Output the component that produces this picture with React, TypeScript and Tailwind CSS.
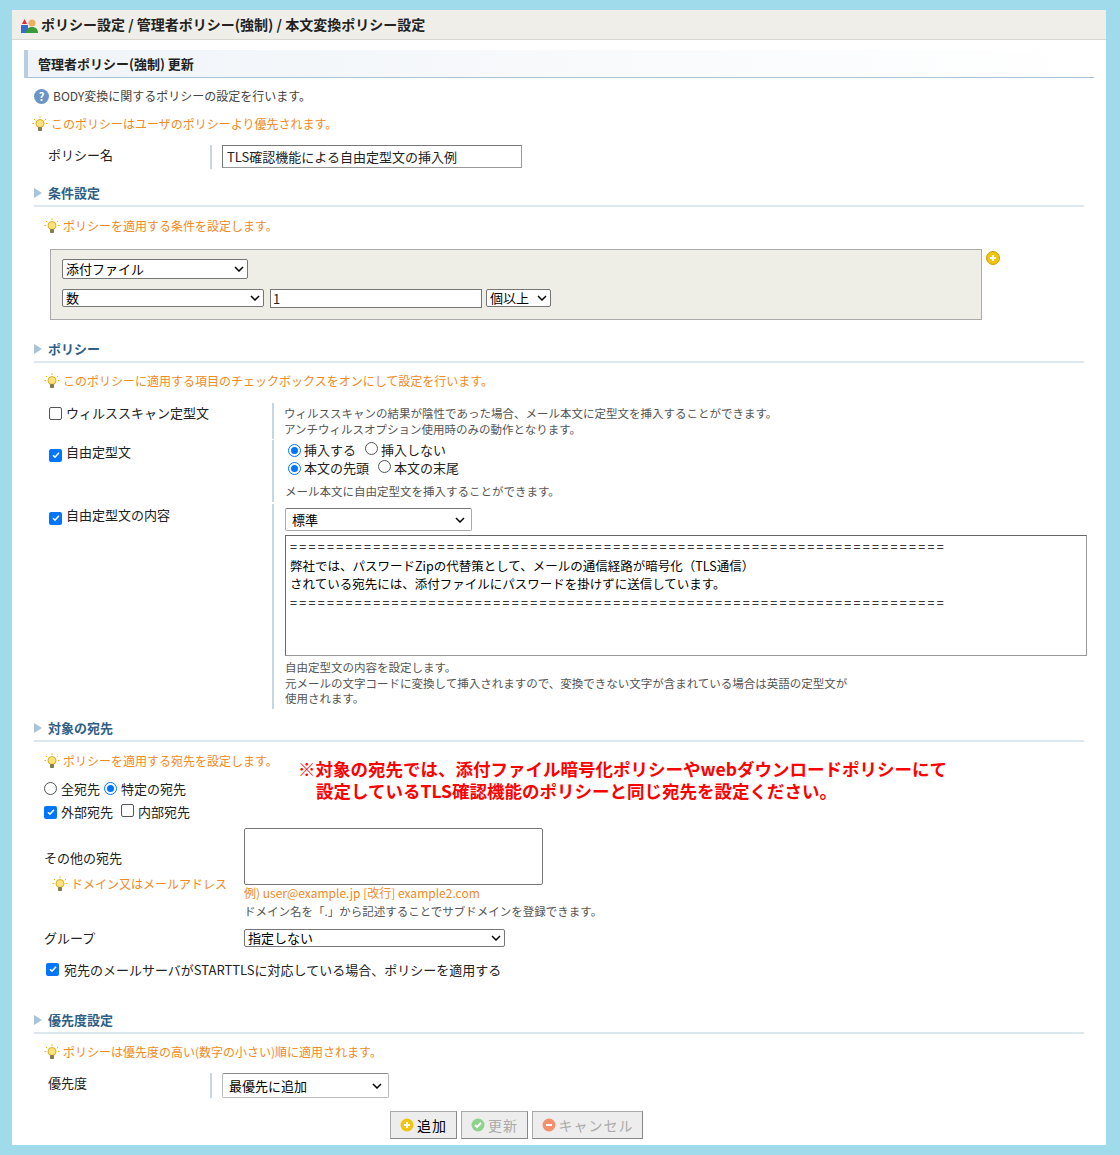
import React from "react";

const Bulb = () => (
  <svg width="16" height="16" viewBox="0 0 16 16" className="inline-block shrink-0">
    <g stroke="#f0b400" strokeWidth="1">
      <line x1="8" y1="0.5" x2="8" y2="2" /><line x1="2" y1="3" x2="3.2" y2="4.2" /><line x1="14" y1="3" x2="12.8" y2="4.2" />
      <line x1="0.5" y1="7.5" x2="2" y2="7.5" /><line x1="14" y1="7.5" x2="15.5" y2="7.5" />
    </g>
    <circle cx="8" cy="7.5" r="4" fill="#ffe37a" stroke="#c8a000" strokeWidth="0.8" />
    <rect x="6" y="11" width="4" height="4" rx="0.8" fill="#8a7a50" />
  </svg>
);

const Hint = ({ children, cls = "" }: { children: React.ReactNode; cls?: string }) => (
  <div className={`flex items-center gap-[3px] text-[12px] text-[#f08a24] ${cls}`}>
    <Bulb />
    <span>{children}</span>
  </div>
);

const Section = ({ title, cls = "" }: { title: string; cls?: string }) => (
  <div className={`mx-[22px] border-b-2 border-[#dce8f0] flex items-center h-[26px] ${cls}`}>
    <span className="w-0 h-0 border-y-[5px] border-y-transparent border-l-[8px] border-l-[#a9c4d8] ml-[0px] mr-[6px]" />
    <span className="text-[13px] font-bold text-[#2f5f86]">{title}</span>
  </div>
);

const Select = ({ text, cls }: { text: string; cls: string }) => (
  <div className={`flex items-center justify-between border border-[#767676] rounded-[2px] bg-white px-[3px] text-[13px] text-black ${cls}`}>
    <span>{text}</span>
    <svg width="10" height="6" viewBox="0 0 10 6"><path d="M1 1l4 4 4-4" fill="none" stroke="#000" strokeWidth="1.5" /></svg>
  </div>
);

const Check = ({ on }: { on: boolean }) =>
  on ? (
    <span className="inline-flex w-[13px] h-[13px] rounded-[2px] bg-[#0075ff] items-center justify-center shrink-0">
      <svg width="10" height="10" viewBox="0 0 10 10"><path d="M2 5.2l2 2 4-4.5" fill="none" stroke="#fff" strokeWidth="1.6" /></svg>
    </span>
  ) : (
    <span className="inline-block w-[13px] h-[13px] rounded-[2px] border border-[#555] bg-white shrink-0" />
  );

const Radio = ({ on }: { on: boolean }) =>
  on ? (
    <span className="inline-flex w-[13px] h-[13px] rounded-full border-[1.5px] border-[#0075ff] items-center justify-center shrink-0">
      <span className="w-[7px] h-[7px] rounded-full bg-[#0075ff]" />
    </span>
  ) : (
    <span className="inline-block w-[13px] h-[13px] rounded-full border border-[#555] bg-white shrink-0" />
  );

const Btn = ({ color, label, dis, w, icon }: { color: string; label: string; dis?: boolean; w: string; icon: React.ReactNode }) => (
  <div className={`flex items-center justify-center gap-[3px] h-[28px] border border-[#aaa] border-b-[#888] border-r-[#888] bg-[#ededed] text-[14px] tracking-[1px] ${dis ? "text-[#aaa]" : "text-black"} ${w}`}>
    <svg width="14" height="14" viewBox="0 0 14 14">
      <circle cx="7" cy="7" r="6.5" fill={color} />
      {icon}
    </svg>
    <span>{label}</span>
  </div>
);

const eq = "=".repeat(71);

export default function App() {
  return (
    <div className="w-[1120px] h-[1155px] bg-[#9fdbea] pt-[10px] pl-[12px] pr-[14px]" style={{ fontFamily: '"Noto Sans CJK JP", "Noto Sans", sans-serif' }}>
      <div className="bg-white h-[1135px] text-[#222]">
        <div className="h-[30px] bg-[#efeee9] border-b border-[#d8d8d0] flex items-center pl-[8px] gap-[3px]">
          <svg width="18" height="18" viewBox="0 0 18 18">
            <rect x="1" y="9" width="7" height="8" fill="#3a6bc8" />
            <path d="M2 8l2.5-5 2.5 5z" fill="#e23" />
            <circle cx="12" cy="7" r="3.5" fill="#e8b060" />
            <path d="M6 17c0-4 2.5-6 6-6s6 2 6 6z" fill="#3a9a3a" />
          </svg>
          <span className="text-[14px] font-bold">ポリシー設定 / 管理者ポリシー(強制) / 本文変換ポリシー設定</span>
        </div>
        <div className="ml-[12px] mr-[12px] mt-[10px] h-[28px] border-l-4 border-[#b8cde0] border-b border-b-[#a9c4d8] bg-gradient-to-r from-[#f0f4f8] to-white flex items-center pl-[10px] text-[13px] font-bold">
          管理者ポリシー(強制) 更新
        </div>
        <div className="ml-[22px] mt-[9px] flex items-center gap-[4px] text-[12px] text-[#444]">
          <span className="w-[15px] h-[15px] rounded-full bg-[#6b95c8] text-white text-[11px] font-bold flex items-center justify-center">?</span>
          BODY変換に関するポリシーの設定を行います。
        </div>
        <Hint cls="ml-[20px] mt-[10px]">このポリシーはユーザのポリシーより優先されます。</Hint>
        <div className="flex mt-[12px] h-[24px]">
          <div className="w-[198px] pl-[36px] text-[13px]">ポリシー名</div>
          <div className="border-l-2 border-[#c5d6e4] pl-[10px]">
            <div className="w-[300px] h-[23px] border border-[#999] border-t-[#777] border-l-[#777] bg-white text-[13px] px-[4px] flex items-center">TLS確認機能による自由定型文の挿入例</div>
          </div>
        </div>
        <Section title="条件設定" cls="mt-[12px]" />
        <Hint cls="ml-[32px] mt-[10px]">ポリシーを適用する条件を設定します。</Hint>
        <div className="flex mt-[14px] ml-[38px]">
          <div className="w-[932px] h-[71px] bg-[#eeede6] border border-[#aaa] pl-[11px] pt-[9px]">
            <Select text="添付ファイル" cls="w-[186px] h-[20px]" />
            <div className="flex gap-[6px] mt-[10px]">
              <Select text="数" cls="w-[202px] h-[18px]" />
              <div className="w-[212px] h-[19px] border border-[#777] bg-white text-[13px] px-[2px] flex items-center">1</div>
              <Select text="個以上" cls="w-[65px] h-[18px] ml-[-2px]" />
            </div>
          </div>
          <svg width="14" height="14" viewBox="0 0 14 14" className="ml-[4px] mt-[2px]">
            <circle cx="7" cy="7" r="6.5" fill="#f1c40f" stroke="#c9a200" />
            <path d="M7 4v6M4 7h6" stroke="#fff" strokeWidth="2" />
          </svg>
        </div>
        <Section title="ポリシー" cls="mt-[17px]" />
        <Hint cls="ml-[32px] mt-[9px]">このポリシーに適用する項目のチェックボックスをオンにして設定を行います。</Hint>
        <div className="mt-[13px] text-[13px]">
          <div className="flex">
            <div className="w-[260px] pl-[37px] flex items-center gap-[4px] h-[20px]"><Check on={false} />ウィルススキャン定型文</div>
            <div className="border-l-2 border-[#c5d6e4] pl-[10px] text-[11.5px] text-[#555] leading-[16px] pt-[2px] pb-[2px]">
              <div>ウィルススキャンの結果が陰性であった場合、メール本文に定型文を挿入することができます。</div>
              <div>アンチウィルスオプション使用時のみの動作となります。</div>
            </div>
          </div>
          <div className="flex mt-[1px]">
            <div className="w-[260px] pl-[37px] flex items-start gap-[4px] pt-[2px]"><span className="mt-[3px]"><Check on /></span>自由定型文</div>
            <div className="border-l-2 border-[#c5d6e4] pl-[14px] pb-[2px]">
              <div className="flex items-center gap-[3px] h-[18px] mt-[1px]"><Radio on />挿入する<span className="ml-[6px]"><Radio on={false} /></span>挿入しない</div>
              <div className="flex items-center gap-[3px] h-[18px]"><Radio on />本文の先頭<span className="ml-[6px]"><Radio on={false} /></span>本文の末尾</div>
              <div className="text-[11.5px] text-[#555] mt-[6px] -ml-[3px]">メール本文に自由定型文を挿入することができます。</div>
            </div>
          </div>
          <div className="flex mt-[2px]">
            <div className="w-[260px] pl-[37px] flex items-start gap-[4px] pt-[1px]"><span className="mt-[3px]"><Check on /></span>自由定型文の内容</div>
            <div className="border-l-2 border-[#c5d6e4] pl-[11px] pt-[4px]">
              <Select text="標準" cls="w-[187px] h-[23px] border-[#aaa] border-t-[#777] px-[6px]" />
              <div className="w-[802px] h-[121px] mt-[4px] border border-[#999] border-t-[#666] border-l-[#666] bg-white px-[4px] pt-[2px] text-[12.5px] leading-[18.5px] text-black relative">
                <div className="tracking-[2.3px] overflow-hidden whitespace-nowrap">{eq}</div>
                <div>弊社では、パスワードZipの代替策として、メールの通信経路が暗号化（TLS通信）</div>
                <div>されている宛先には、添付ファイルにパスワードを掛けずに送信しています。</div>
                <div className="tracking-[2.3px] overflow-hidden whitespace-nowrap">{eq}</div>
              </div>
              <div className="text-[11.5px] text-[#555] leading-[15.5px] mt-[4px] pb-[2px]">
                <div>自由定型文の内容を設定します。</div>
                <div>元メールの文字コードに変換して挿入されますので、変換できない文字が含まれている場合は英語の定型文が</div>
                <div>使用されます。</div>
              </div>
            </div>
          </div>
        </div>
        <Section title="対象の宛先" cls="mt-[7px]" />
        <div className="flex">
          <div className="w-[274px]">
            <Hint cls="ml-[32px] mt-[10px]">ポリシーを適用する宛先を設定します。</Hint>
            <div className="ml-[32px] mt-[9px] flex items-center gap-[4px] text-[13px]"><Radio on={false} />全宛先<Radio on />特定の宛先</div>
            <div className="ml-[32px] mt-[4px] flex items-center gap-[4px] text-[13px]"><Check on />外部宛先<span className="ml-[4px]"><Check on={false} /></span>内部宛先</div>
          </div>
          <div className="text-[17.5px] font-bold text-[#ff0000] leading-[22px] mt-[16px] ml-[12px]">
            <div>※対象の宛先では、添付ファイル暗号化ポリシーやwebダウンロードポリシーにて</div>
            <div className="pl-[18px]">設定しているTLS確認機能のポリシーと同じ宛先を設定ください。</div>
          </div>
        </div>
        <div className="flex mt-[6px]">
          <div className="w-[232px] pl-[32px] pt-[20px] text-[13px]">
            <div>その他の宛先</div>
            <Hint cls="ml-[8px] mt-[8px]">ドメイン又はメールアドレス</Hint>
          </div>
          <div>
            <div className="w-[299px] h-[57px] border border-[#777] rounded-[2px] bg-white" />
            <div className="text-[12px] text-[#f08a24] mt-[-1px]">例) user@example.jp [改行] example2.com</div>
            <div className="text-[11.5px] text-[#555] mt-[1px]">ドメイン名を「.」から記述することでサブドメインを登録できます。</div>
          </div>
        </div>
        <div className="flex mt-[8px] items-center">
          <div className="w-[232px] pl-[32px] text-[13px]">グループ</div>
          <Select text="指定しない" cls="w-[261px] h-[18px] rounded-[2px]" />
        </div>
        <div className="ml-[34px] mt-[12px] flex items-center gap-[5px] text-[13px]"><Check on />宛先のメールサーバがSTARTTLSに対応している場合、ポリシーを適用する</div>
        <Section title="優先度設定" cls="mt-[29px]" />
        <Hint cls="ml-[32px] mt-[9px]">ポリシーは優先度の高い(数字の小さい)順に適用されます。</Hint>
        <div className="flex mt-[12px] h-[25px]">
          <div className="w-[198px] pl-[36px] text-[13px]">優先度</div>
          <div className="border-l-2 border-[#c5d6e4] pl-[10px]">
            <Select text="最優先に追加" cls="w-[167px] h-[25px] border-[#bbb] border-t-[#888] px-[6px]" />
          </div>
        </div>
        <div className="flex gap-[4px] ml-[378px] mt-[13px]">
          <Btn color="#f1c40f" label="追加" w="w-[67px]" icon={<path d="M7 4v6M4 7h6" stroke="#fff" strokeWidth="2" />} />
          <Btn color="#8fd18f" label="更新" dis w="w-[67px]" icon={<path d="M4 7l2 2 4-4" fill="none" stroke="#fff" strokeWidth="1.8" />} />
          <Btn color="#f39070" label="キャンセル" dis w="w-[111px]" icon={<path d="M4 7h6" stroke="#fff" strokeWidth="2" />} />
        </div>
      </div>
    </div>
  );
}
